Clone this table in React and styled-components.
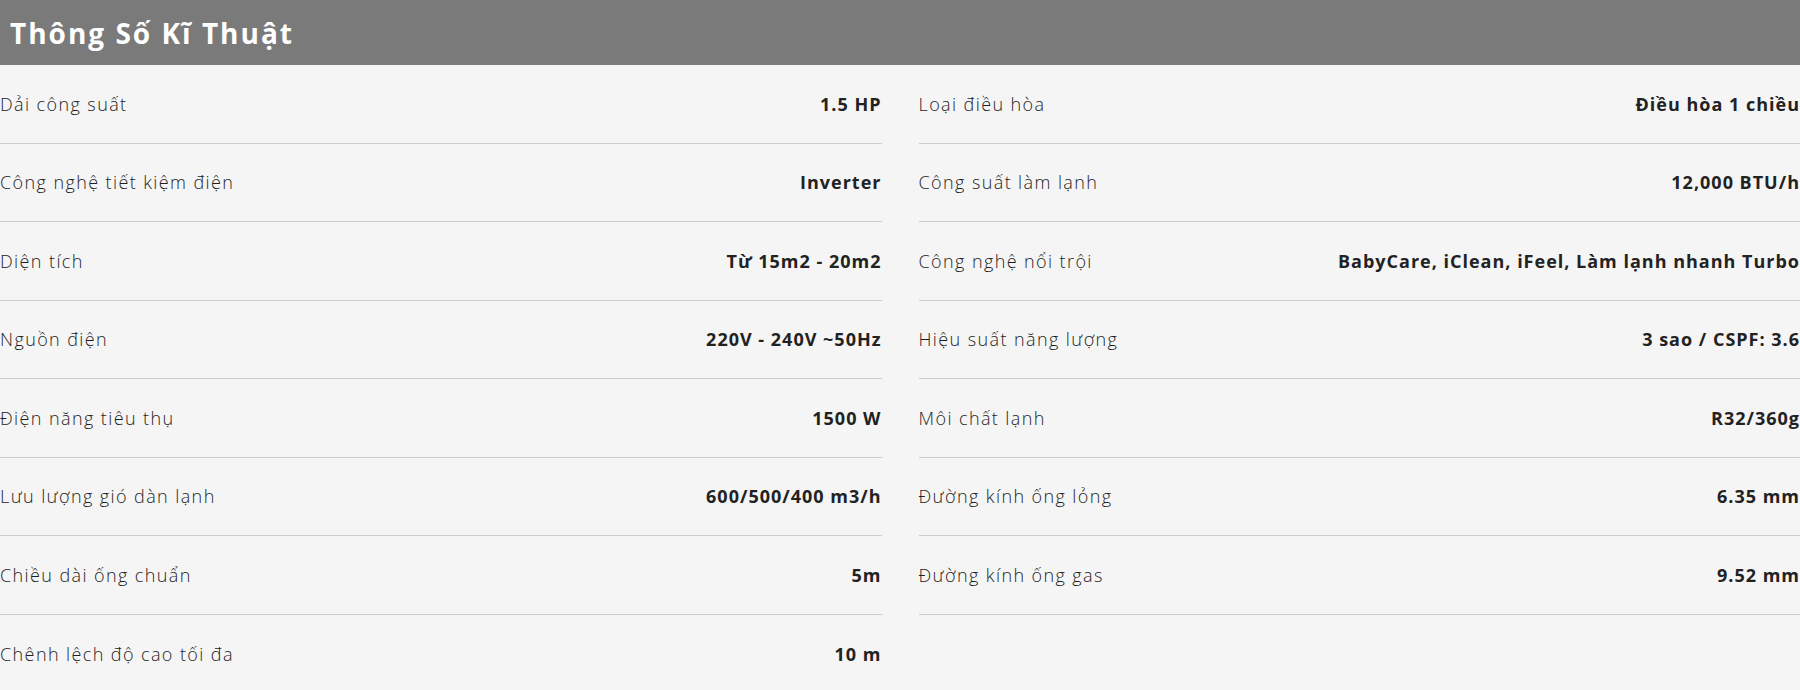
import styled, { createGlobalStyle } from 'styled-components';

const GlobalStyle = createGlobalStyle`
    body {
        margin: 0;
        background: #f5f5f5;
        font-family: "Open Sans", "Noto Sans", sans-serif;
    }
`
const Section = styled.section`
    background: #f5f5f5;
    min-height: 690px;
`
const Title = styled.h2`
    margin: 0;
    height: 65px;
    display: flex;
    align-items: center;
    padding-left: 10px;
    background: #7a7a7a;
    color: #fff;
    font-size: 28px;
    font-weight: 700;
    letter-spacing: 2px;
`
const Columns = styled.div`
    display: grid;
    grid-template-columns: 1fr 1fr;
    column-gap: 37px;
    align-items: start;
`
const List = styled.ul`
    list-style: none;
    margin: 0;
    padding: 0;
`
const Row = styled.li`
    box-sizing: border-box;
    display: flex;
    justify-content: space-between;
    align-items: center;
    height: 78.5px;
    border-bottom: ${p => p.$last ? 'none' : '1px solid #cccccc'};
`
const Label = styled.span`
    font-size: 18px;
    font-weight: 300;
    letter-spacing: 1.4px;
    color: #1e1e1e;
`
const Value = styled.span`
    font-size: 18px;
    font-weight: 700;
    letter-spacing: 1px;
    color: #222;
    text-align: right;
`

const left = [
    ['Dải công suất', '1.5 HP'],
    ['Công nghệ tiết kiệm điện', 'Inverter'],
    ['Diện tích', 'Từ 15m2 - 20m2'],
    ['Nguồn điện', '220V - 240V ~50Hz'],
    ['Điện năng tiêu thụ', '1500 W'],
    ['Lưu lượng gió dàn lạnh', '600/500/400 m3/h'],
    ['Chiều dài ống chuẩn', '5m'],
    ['Chênh lệch độ cao tối đa', '10 m'],
]
const right = [
    ['Loại điều hòa', 'Điều hòa 1 chiều'],
    ['Công suất làm lạnh', '12,000 BTU/h'],
    ['Công nghệ nổi trội', 'BabyCare, iClean, iFeel, Làm lạnh nhanh Turbo'],
    ['Hiệu suất năng lượng', '3 sao / CSPF: 3.6'],
    ['Môi chất lạnh', 'R32/360g'],
    ['Đường kính ống lỏng', '6.35 mm'],
    ['Đường kính ống gas', '9.52 mm'],
]

const SpecList = ({ items, lastBorder }) => (
    <List>
        {items.map(([k, v], i) => (
            <Row key={k} $last={!lastBorder && i === items.length - 1}>
                <Label>{k}</Label>
                <Value>{v}</Value>
            </Row>
        ))}
    </List>
)

const App = () => {
    return (
        <Section>
            <GlobalStyle />
            <Title>Thông Số Kĩ Thuật</Title>
            <Columns>
                <SpecList items={left} />
                <SpecList items={right} lastBorder />
            </Columns>
        </Section>
    )
}

export default App;
